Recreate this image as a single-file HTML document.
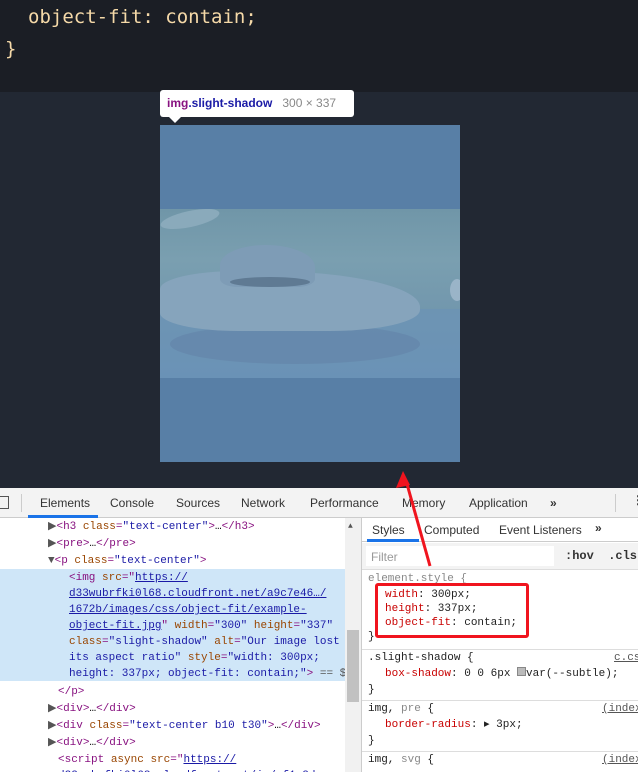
<!DOCTYPE html>
<html><head><meta charset="utf-8">
<style>
*{margin:0;padding:0;box-sizing:border-box}
body{width:638px;height:772px;overflow:hidden;background:#222833;font-family:"Liberation Sans",sans-serif;position:relative}
.top{position:absolute;left:0;top:0;width:638px;height:92px;background:#1b1e25}
.code{position:absolute;font-family:"DejaVu Sans Mono","Liberation Mono",monospace;font-size:19px;color:#f5d9a8}
.img{position:absolute;left:160px;top:125px;width:300px;height:337px;background:#587fa6}
.photo{position:absolute;left:160px;top:209px;width:300px;height:169px;overflow:hidden;
background:linear-gradient(180deg,#7096a8 0%,#7a9fb0 30%,#7297ad 60%,#6a92b4 100%)}
.tip{position:absolute;left:160px;top:90px;width:194px;height:27px;background:#fff;border-radius:3px;font-size:12px;line-height:27px;padding-left:7px}
.tip:after{content:"";position:absolute;left:9px;bottom:-6px;border:6px solid transparent;border-top-color:#fff;border-bottom:0}
.tabs{position:absolute;left:0;top:488px;width:638px;height:30px;background:#f3f3f3;border-bottom:1px solid #ccc;font-size:12px;color:#333}
.tabs span{position:absolute;top:8px}
.mono{font-family:"Liberation Mono",monospace;font-size:11px}
.left{position:absolute;left:0;top:518px;width:361px;height:254px;background:#fff;overflow:hidden}
.ln{position:absolute;white-space:pre;line-height:16px}
.t{color:#881280}.a{color:#994500}.v{color:#1a1aa6}.u{color:#1a1aa6;text-decoration:underline}.g{color:#555}
.right{position:absolute;left:361px;top:518px;width:277px;height:254px;background:#fff;border-left:1px solid #ccc;overflow:hidden}
.p{color:#c80000}
</style></head><body>
<div class="top"></div>
<div class="code" style="left:28px;top:6px">object-fit: contain;</div>
<div class="code" style="left:5px;top:38px">}</div>
<div class="img"></div>
<div class="photo">
<div style="position:absolute;left:0;top:100px;width:300px;height:69px;background:#6b93b8;opacity:.6"></div>
<div style="position:absolute;left:10px;top:115px;width:250px;height:40px;background:#6587ab;border-radius:50%;opacity:.8"></div>
<div style="position:absolute;left:0;top:62px;width:260px;height:60px;background:#86a4bc;border-radius:30% 60% 35% 30%"></div>
<div style="position:absolute;left:60px;top:36px;width:95px;height:42px;background:#7e9cb6;border-radius:50% 55% 20% 20%"></div>
<div style="position:absolute;left:70px;top:68px;width:80px;height:10px;background:#5f7a93;border-radius:50%"></div>
<div style="position:absolute;left:0;top:2px;width:60px;height:16px;background:#8aaabb;border-radius:50%;transform:rotate(-12deg)"></div>
<div style="position:absolute;left:290px;top:70px;width:14px;height:22px;background:#9ab4c8;border-radius:50%"></div>
</div>
<div class="tip"><span style="color:#881280;font-weight:bold">img</span><span style="color:#1a1aa6;font-weight:bold">.slight-shadow</span><span style="color:#888;margin-left:10px">300 × 337</span></div>

<div class="tabs">
<div style="position:absolute;left:-4px;top:8px;width:13px;height:13px;border:1px solid #555"></div>
<div style="position:absolute;left:21px;top:6px;width:1px;height:18px;background:#ccc"></div>
<span style="left:40px">Elements</span><span style="left:110px">Console</span><span style="left:176px">Sources</span><span style="left:241px">Network</span><span style="left:310px">Performance</span><span style="left:402px">Memory</span><span style="left:469px">Application</span><span style="left:550px;font-weight:bold">»</span>
<div style="position:absolute;left:28px;top:27px;width:70px;height:3px;background:#1a73e8"></div>
<div style="position:absolute;left:615px;top:6px;width:1px;height:18px;background:#ccc"></div>
<span style="left:632px;top:5px;font-weight:bold">⋮</span>
</div>

<div class="left mono">
<div style="position:absolute;left:0;top:51px;width:345px;height:112px;background:#cfe6f8"></div>
<div class="ln" style="left:48px;top:1px"><span class="g">▶</span><span class="t">&lt;h3</span> <span class="a">class</span><span class="t">=</span><span class="v">"text-center"</span><span class="t">&gt;</span>…<span class="t">&lt;/h3&gt;</span></div>
<div class="ln" style="left:48px;top:18px"><span class="g">▶</span><span class="t">&lt;pre&gt;</span>…<span class="t">&lt;/pre&gt;</span></div>
<div class="ln" style="left:48px;top:35px"><span class="g">▼</span><span class="t">&lt;p</span> <span class="a">class</span><span class="t">=</span><span class="v">"text-center"</span><span class="t">&gt;</span></div>
<div class="ln" style="left:69px;top:52px"><span class="t">&lt;img</span> <span class="a">src</span><span class="t">="</span><span class="u">https://</span></div>
<div class="ln" style="left:69px;top:68px"><span class="u">d33wubrfki0l68.cloudfront.net/a9c7e46…/</span></div>
<div class="ln" style="left:69px;top:84px"><span class="u">1672b/images/css/object-fit/example-</span></div>
<div class="ln" style="left:69px;top:100px"><span class="u">object-fit.jpg</span><span class="t">"</span> <span class="a">width</span><span class="t">=</span><span class="v">"300"</span> <span class="a">height</span><span class="t">=</span><span class="v">"337"</span></div>
<div class="ln" style="left:69px;top:116px"><span class="a">class</span><span class="t">=</span><span class="v">"slight-shadow"</span> <span class="a">alt</span><span class="t">=</span><span class="v">"Our image lost</span></div>
<div class="ln" style="left:69px;top:132px"><span class="v">its aspect ratio"</span> <span class="a">style</span><span class="t">=</span><span class="v">"width: 300px;</span></div>
<div class="ln" style="left:69px;top:148px"><span class="v">height: 337px; object-fit: contain;"</span><span class="t">&gt;</span> <span class="g">== $0</span></div>
<div class="ln" style="left:58px;top:166px"><span class="t">&lt;/p&gt;</span></div>
<div class="ln" style="left:48px;top:183px"><span class="g">▶</span><span class="t">&lt;div&gt;</span>…<span class="t">&lt;/div&gt;</span></div>
<div class="ln" style="left:48px;top:200px"><span class="g">▶</span><span class="t">&lt;div</span> <span class="a">class</span><span class="t">=</span><span class="v">"text-center b10 t30"</span><span class="t">&gt;</span>…<span class="t">&lt;/div&gt;</span></div>
<div class="ln" style="left:48px;top:217px"><span class="g">▶</span><span class="t">&lt;div&gt;</span>…<span class="t">&lt;/div&gt;</span></div>
<div class="ln" style="left:58px;top:234px"><span class="t">&lt;script</span> <span class="a">async</span> <span class="a">src</span><span class="t">="</span><span class="u">https://</span></div>
<div class="ln" style="left:58px;top:250px"><span class="u">d33wubrfki0l68.cloudfront.net/js/cf1a3d</span></div>
<div style="position:absolute;left:345px;top:0;width:16px;height:254px;background:#f1f1f1"></div>
<div style="position:absolute;left:347px;top:112px;width:12px;height:72px;background:#c1c1c1"></div>
<div style="position:absolute;left:348px;top:4px;font-size:8px;color:#555">▲</div>
</div>

<div class="right">
<div style="position:absolute;left:0;top:0;width:277px;height:24px;border-bottom:1px solid #ccc;font-size:12px;color:#333">
<span style="position:absolute;left:10px;top:5px">Styles</span><span style="position:absolute;left:62px;top:5px">Computed</span><span style="position:absolute;left:137px;top:5px">Event Listeners</span><span style="position:absolute;left:233px;top:3px;font-weight:bold">»</span>
<div style="position:absolute;left:5px;top:21px;width:52px;height:3px;background:#1a73e8"></div></div>
<div style="position:absolute;left:0;top:25px;width:277px;height:27px;background:#f3f3f3;border-bottom:1px solid #ddd">
<div style="position:absolute;left:4px;top:3px;width:188px;height:20px;background:#fff;font-size:12px;color:#999;padding:4px 5px">Filter</div>
<span class="mono" style="position:absolute;left:203px;top:6px;font-size:12px;font-weight:bold;color:#333">:hov&nbsp; .cls</span></div>
<div class="mono" style="position:absolute;left:0;top:53px;width:277px;color:#222">
<div class="ln" style="left:6px;top:0;color:#888">element.style {</div>
<div class="ln" style="left:23px;top:16px"><span class="p">width</span>: 300px;</div>
<div class="ln" style="left:23px;top:30px"><span class="p">height</span>: 337px;</div>
<div class="ln" style="left:23px;top:44px"><span class="p">object-fit</span>: contain;</div>
<div class="ln" style="left:6px;top:58px">}</div>
<div style="position:absolute;left:0;top:78px;width:277px;border-top:1px solid #ddd"></div>
<div class="ln" style="left:6px;top:79px">.slight-shadow {</div><div class="ln" style="left:252px;top:79px;color:#555;text-decoration:underline">c.css</div>
<div class="ln" style="left:23px;top:95px"><span class="p">box-shadow</span>: 0 0 6px <span style="display:inline-block;width:9px;height:9px;background:#bbb;border:1px solid #888"></span>var(--subtle);</div>
<div class="ln" style="left:6px;top:111px">}</div>
<div style="position:absolute;left:0;top:129px;width:277px;border-top:1px solid #ddd"></div>
<div class="ln" style="left:6px;top:130px">img, <span style="color:#888">pre</span> {</div><div class="ln" style="left:240px;top:130px;color:#555;text-decoration:underline">(index)</div>
<div class="ln" style="left:23px;top:146px"><span class="p">border-radius</span>: ▸ 3px;</div>
<div class="ln" style="left:6px;top:162px">}</div>
<div style="position:absolute;left:0;top:180px;width:277px;border-top:1px solid #ddd"></div>
<div class="ln" style="left:6px;top:181px">img, <span style="color:#888">svg</span> {</div><div class="ln" style="left:240px;top:181px;color:#555;text-decoration:underline">(index)</div>
</div>
</div>

<div style="position:absolute;left:375px;top:583px;width:154px;height:55px;border:3px solid #f0141e;border-radius:3px"></div>
<svg style="position:absolute;left:0;top:0" width="638" height="772">
<line x1="430" y1="566" x2="407" y2="484" stroke="#f0141e" stroke-width="3"/>
<polygon points="403,471 396,488 410,485" fill="#f0141e"/>
</svg>
</body></html>
